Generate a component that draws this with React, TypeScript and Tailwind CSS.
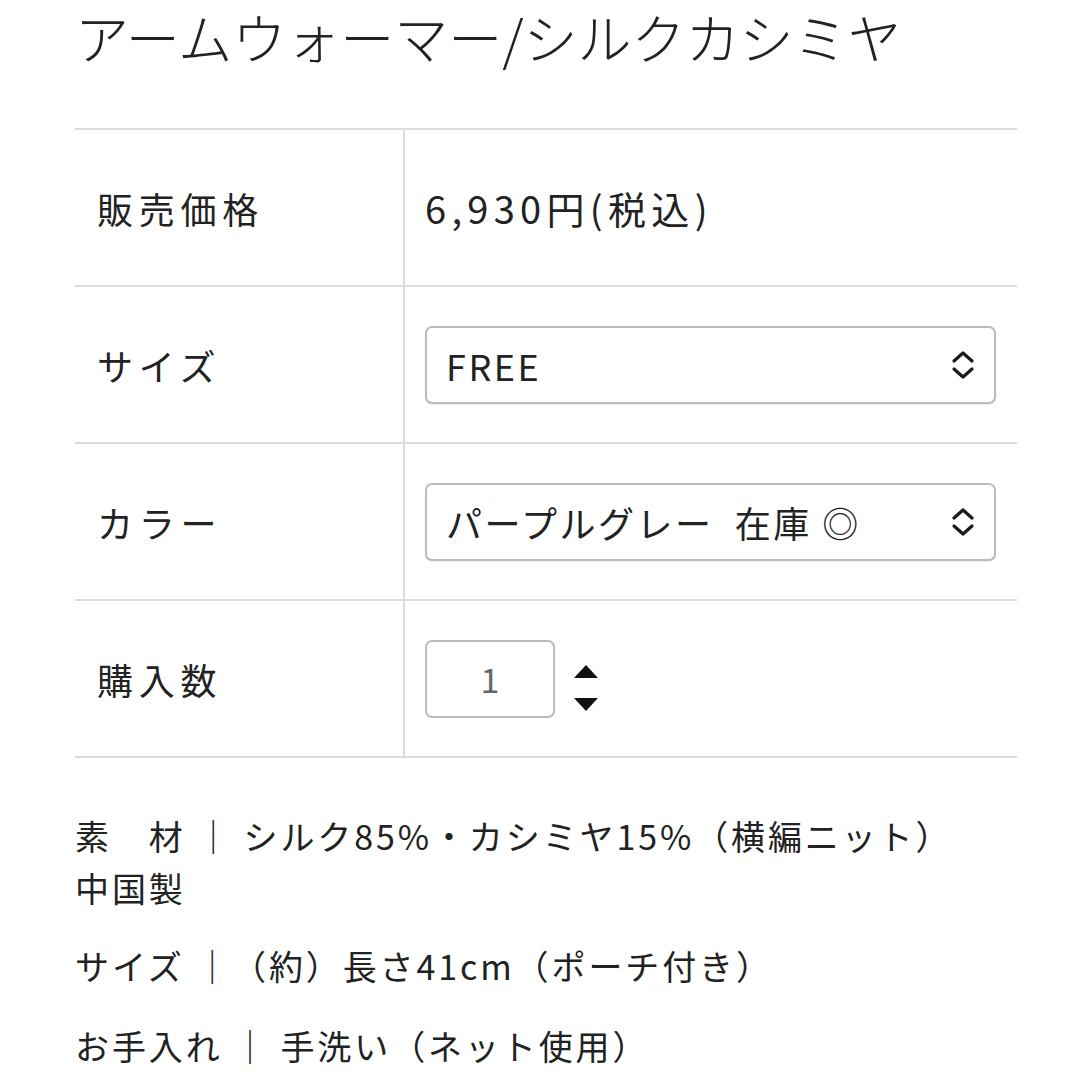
const jp = "font-['Noto_Sans_CJK_JP','Noto_Sans',sans-serif]";

function UpDown() {
  return (
    <svg width="26" height="30" viewBox="0 0 26 30" fill="none" stroke="#1a1a1a" strokeWidth="3.2" strokeLinecap="round" strokeLinejoin="round">
      <path d="M4 11 L13 3 L22 11" />
      <path d="M4 19 L13 27 L22 19" />
    </svg>
  );
}

function Stepper() {
  return (
    <div className="flex flex-col gap-[20px] ml-[19px] mt-[18px]">
      <svg width="24" height="13" viewBox="0 0 24 13">
        <path d="M12 0 L24 13 L0 13 Z" fill="#111" />
      </svg>
      <svg width="24" height="13" viewBox="0 0 24 13">
        <path d="M0 0 L24 0 L12 13 Z" fill="#111" />
      </svg>
    </div>
  );
}

function Select({ value }: { value: string }) {
  return (
    <div className="flex items-center justify-between h-[78px] w-full border-2 border-[#bcbcbc] rounded-[7px] bg-white pl-[19px] pr-[18px] shadow-[0_1px_1px_rgba(0,0,0,0.08)]">
      <span className="text-[36px] tracking-[0.07em] whitespace-pre">{value}</span>
      <UpDown />
    </div>
  );
}

export default function App() {
  const rows = [
    { label: "販売価格", content: <span className="text-[38px] tracking-[0.14em]">6,930円(税込)</span> },
    { label: "サイズ", content: <Select value="FREE" /> },
    { label: "カラー", content: <Select value="パープルグレー  在庫 ◎" /> },
    {
      label: "購入数",
      content: (
        <div className="flex items-center">
          <div className="w-[130px] h-[78px] border-2 border-[#bcbcbc] rounded-[7px] flex items-center justify-center text-[34px] text-[#666]">1</div>
          <Stepper />
        </div>
      ),
    },
  ];

  return (
    <div className={`${jp} bg-white text-[#222] w-[1080px] min-h-[1080px] pl-[75px] pr-[63px]`}>
      <h1 className="pt-[2px] text-[54px] leading-[70px] font-light">アームウォーマー/シルクカシミヤ</h1>

      <div className="mt-[56px] border-t-2 border-[#dcdcdc]">
        {rows.map((r) => (
          <div key={r.label} className="grid grid-cols-[330px_1fr] h-[157px] border-b-2 border-[#dcdcdc]">
            <div className="flex items-center pl-[22px] border-r-2 border-[#dcdcdc] text-[36px] tracking-[0.16em]">{r.label}</div>
            <div className="flex items-center pl-[20px] pr-[21px]">{r.content}</div>
          </div>
        ))}
      </div>

      <div className="mt-[52px] text-[34px] leading-[52px] tracking-[0.085em]">
        <p>素　材 ｜ シルク85%・カシミヤ15%（横編ニット）<br />中国製</p>
        <p className="mt-[26px]">サイズ ｜（約）長さ41cm（ポーチ付き）</p>
        <p className="mt-[28px]">お手入れ ｜ 手洗い（ネット使用）</p>
      </div>
    </div>
  );
}
